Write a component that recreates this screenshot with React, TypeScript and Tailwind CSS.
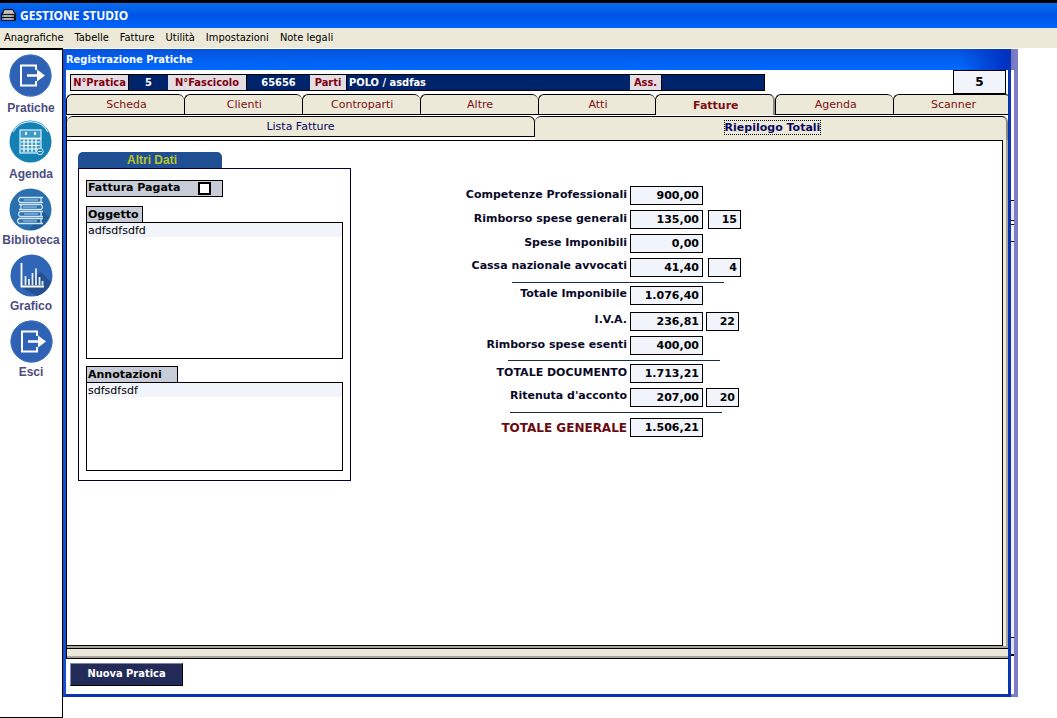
import React, { useState } from "react";
import clsx from "clsx";

const ExitIcon = () => (
  <svg viewBox="0 0 43 43" className="h-[43px] w-[43px]" aria-hidden="true">
    <circle cx="21.5" cy="21.5" r="21" fill="#2f62b4" />
    <circle cx="21.5" cy="21.5" r="20.5" fill="none" stroke="#3f78c4" />
    <path
      d="M27 16v-4.5H12v20h15V27"
      fill="none"
      stroke="#fff"
      strokeWidth="2"
    />
    <path d="M18 20.200h10v-4.700l8 6-8 6v-4.700H18z" fill="#fff" />
  </svg>
);

const AgendaIcon = () => (
  <svg viewBox="0 0 43 43" className="h-[43px] w-[43px]" aria-hidden="true">
    <circle cx="21.5" cy="21.5" r="21" fill="#1580b4" />
    <path
      d="M4 12a20 20 0 0 1 35 0"
      fill="none"
      stroke="#bfe4f2"
      strokeWidth="1.2"
    />
    <rect
      x="11"
      y="10"
      width="21"
      height="23"
      fill="#3b9cc8"
      stroke="#d8f0f8"
      strokeWidth="1.2"
    />
    <path d="M11 18.5h21" stroke="#fff" strokeWidth="1.6" />
    <path d="M17 12v3M26 12v3" stroke="#fff" strokeWidth="2" />
    <path
      d="M12 22h19M12 25.5h19M12 29h19M15 19v13M19 19v13M23 19v13M27 19v13"
      stroke="#fff"
      strokeWidth="1.2"
    />
    <circle cx="31" cy="31.5" r="3.2" fill="#1580b4" stroke="#d8f0f8" />
    <path d="M29.5 31.5h3" stroke="#fff" />
  </svg>
);

const BooksIcon = () => (
  <svg viewBox="0 0 43 43" className="h-[43px] w-[43px]" aria-hidden="true">
    <circle cx="21.5" cy="21.5" r="21" fill="#2a6fae" />
    <path d="M20 42h2a21 21 0 0 0 18-13l-5-5z" fill="#1f5d97" />
    <g fill="none" stroke="#cfe4f4" strokeWidth="1.3">
      <path d="M34 9.5H11q-3 2.500 0 5h23M32 10v4" />
      <path d="M10 16.5h22q3 2.500 0 5H10M12 17v4" />
      <path d="M34 23.5H11q-3 2.500 0 5h23M32 24v4" />
      <path d="M34 30.5H10q-3 2.500 0 5h24M32 31v4" />
    </g>
    <path
      d="M15 12h14M14 19h14M15 26h14M14 33h14"
      stroke="#7fb4dc"
      strokeWidth="1.5"
    />
  </svg>
);

const ChartIcon = () => (
  <svg viewBox="0 0 43 43" className="h-[43px] w-[43px]" aria-hidden="true">
    <circle cx="21.5" cy="21.5" r="21" fill="#2f66b8" />
    <path d="M31 18l10 10a21 21 0 0 1-14 14l-16-9z" fill="#24508f" />
    <path d="M11.5 9v23.5H34" fill="none" stroke="#fff" strokeWidth="1.8" />
    <path
      d="M15.5 31v-9M19 31v-6M22.5 31V19M26 31V14.5M29.5 31v-8M32.5 31v-4"
      stroke="#e4eefa"
      strokeWidth="1.8"
    />
  </svg>
);

const sidebar = [
  { name: "Pratiche", Icon: ExitIcon, space: "leading-[22px]" },
  { name: "Agenda", Icon: AgendaIcon, space: "leading-[22px]" },
  { name: "Biblioteca", Icon: BooksIcon, space: "pt-[2px] leading-[18px]" },
  { name: "Grafico", Icon: ChartIcon, space: "pt-[2px] leading-[18px]" },
  { name: "Esci", Icon: ExitIcon, space: "pt-[2px] leading-[18px]" },
];

const menu = [
  "Anagrafiche",
  "Tabelle",
  "Fatture",
  "Utilità",
  "Impostazioni",
  "Note legali",
];

const tabs = [
  "Scheda",
  "Clienti",
  "Controparti",
  "Altre",
  "Atti",
  "Fatture",
  "Agenda",
  "Scanner",
];

interface TotalRow {
  id: string;
  label: string;
  value: string;
  rate?: string;
  raised?: boolean;
  space: string;
  rateGap?: string;
  rule?: string;
  grand?: boolean;
}

const totals: TotalRow[] = [
  { id: "comp", label: "Competenze Professionali", value: "900,00", space: "" },
  {
    id: "gen",
    label: "Rimborso spese generali",
    value: "135,00",
    rate: "15",
    rateGap: "ml-[5px]",
    space: "mt-[5px]",
  },
  { id: "imp", label: "Spese Imponibili", value: "0,00", space: "mt-[5px]" },
  {
    id: "cassa",
    label: "Cassa nazionale avvocati",
    value: "41,40",
    rate: "4",
    rateGap: "ml-[5px]",
    raised: true,
    space: "mt-[5px]",
  },
  {
    id: "totimp",
    label: "Totale Imponibile",
    value: "1.076,40",
    raised: true,
    rule: "ml-[62px] mt-[5px]",
    space: "mt-[3px]",
  },
  {
    id: "iva",
    label: "I.V.A.",
    value: "236,81",
    rate: "22",
    rateGap: "ml-[3px]",
    raised: true,
    space: "mt-[7px]",
  },
  {
    id: "esenti",
    label: "Rimborso spese esenti",
    value: "400,00",
    space: "mt-[5px]",
  },
  {
    id: "doc",
    label: "TOTALE DOCUMENTO",
    value: "1.713,21",
    rule: "ml-[58px] mt-[5px]",
    space: "mt-[3px]",
  },
  {
    id: "rit",
    label: "Ritenuta d'acconto",
    value: "207,00",
    rate: "20",
    rateGap: "ml-[3px]",
    raised: true,
    space: "mt-[5px]",
  },
  {
    id: "grand",
    label: "TOTALE GENERALE",
    value: "1.506,21",
    rule: "ml-[60px] mt-[5px]",
    space: "mt-[5px]",
    grand: true,
  },
];

const condensed =
  "font-['DejaVu_Sans_Condensed','DejaVu_Sans',Tahoma,sans-serif]";

const Field = ({
  id,
  label,
  value,
  labelClass,
  inputClass,
}: {
  id: string;
  label: string;
  value: string;
  labelClass: string;
  inputClass: string;
}) => (
  <>
    <label
      htmlFor={id}
      className={clsx(
        "shrink-0 border-r border-black bg-[#e4dde2] text-center text-[#800010]",
        labelClass
      )}
    >
      {label}
    </label>
    <input
      id={id}
      defaultValue={value}
      className={clsx(
        "min-w-0 bg-[#00246b] text-white outline-none",
        inputClass
      )}
    />
  </>
);

const Totals = () => (
  <div className="pt-[45px]">
    {totals.map((row) => (
      <React.Fragment key={row.id}>
        {row.rule && (
          <hr className={clsx("w-[212px] border-[#123048]", row.rule)} />
        )}
        <div className={clsx("flex h-[19px] items-center", row.space)}>
          <label
            htmlFor={row.id}
            className={clsx(
              "w-[177px] text-right whitespace-nowrap",
              row.raised && "pb-[3px]",
              row.grand ? "text-[12px] text-[#6b0a10]" : "text-[11px]"
            )}
          >
            {row.label}
          </label>
          <input
            id={row.id}
            defaultValue={row.value}
            className="ml-[3px] h-[19px] w-[73px] border border-black bg-[#f1f4fa] px-[3px] text-right text-[11px] text-black outline-none"
          />
          {row.rate && (
            <input
              aria-label={`${row.label} %`}
              defaultValue={row.rate}
              className={clsx(
                "h-[19px] w-[33px] border border-black bg-[#f1f4fa] px-[3px] text-right text-[11px] text-black outline-none",
                row.rateGap
              )}
            />
          )}
        </div>
      </React.Fragment>
    ))}
  </div>
);

const NoteBox = ({
  id,
  label,
  value,
  labelClass,
  boxClass,
}: {
  id: string;
  label: string;
  value: string;
  labelClass: string;
  boxClass: string;
}) => (
  <div>
    <label
      htmlFor={id}
      className={clsx(
        "block h-4 border border-b-0 border-black bg-[#c8ccd6] pl-px text-[11px] leading-[15px] font-bold",
        labelClass
      )}
    >
      {label}
    </label>
    <textarea
      id={id}
      defaultValue={value}
      className={clsx(
        "block w-[257px] resize-none border border-black bg-linear-to-b from-[#f1f4fa] from-[14px] to-white to-[14px] px-px pt-px text-[11px] leading-[14px] outline-none",
        boxClass
      )}
    />
  </div>
);

const AltriDati = () => (
  <section className="w-[273px]">
    <h2 className="h-4 w-[144px] rounded-t-[5px] bg-[#1f4f92] pl-1 text-center font-['Liberation_Sans',Arial,sans-serif] text-[12px] leading-[17px] font-bold text-[#b8c428]">
      Altri Dati
    </h2>
    <div className="border border-[#00003c] px-[7px] pt-[11px] pb-[9px]">
      <label className="flex h-[17px] w-[137px] items-center justify-between border border-black bg-[#c8ccd6] pr-[11px] pl-px text-[11px] font-bold">
        Fattura Pagata
        <input
          type="checkbox"
          className="h-[13px] w-[13px] appearance-none border-2 border-black bg-white checked:bg-black"
        />
      </label>
      <div className="flex flex-col gap-[7px] pt-[9px]">
        <NoteBox
          id="oggetto"
          label="Oggetto"
          value="adfsdfsdfd"
          labelClass="w-[57px]"
          boxClass="h-[137px]"
        />
        <NoteBox
          id="annotazioni"
          label="Annotazioni"
          value="sdfsdfsdf"
          labelClass="w-[92px]"
          boxClass="h-[89px]"
        />
      </div>
    </div>
  </section>
);

const App = () => {
  const [tab, setTab] = useState("Fatture");
  const [subTab, setSubTab] = useState("Riepilogo Totali");

  return (
    <div className="flex min-h-screen flex-col bg-white font-['DejaVu_Sans',Verdana,sans-serif] text-black">
      <header className={condensed}>
        <div className="flex h-7 items-center gap-1 border-t-[3px] border-black bg-linear-to-b from-[#0a6cf0] via-[#0054e3] to-[#0066ff] pl-px">
          <svg viewBox="0 0 15 13" className="h-[13px] w-[15px]" aria-hidden="true">
            <path d="M3 0h9l3 5v7H0V5z" fill="#15151c" />
            <path d="M3.5 1h8l2 4H2z" fill="#b4aeb0" />
            <path d="M1 6h12v2H1zM1 9h12v2H1z" fill="#8c8890" />
            <path d="M3 3h9M3 7h8M3 10h8" stroke="#e4dede" strokeWidth="0.8" />
          </svg>
          <h1 className="font-['Noto_Sans','Trebuchet_MS',sans-serif] text-[12px] font-bold text-white">
            GESTIONE STUDIO
          </h1>
        </div>
        <nav className="flex h-5 items-center gap-[11px] bg-[#ece9d8] pl-1 text-[11px]">
          {menu.map((item) => (
            <button key={item} type="button">
              {item}
            </button>
          ))}
        </nav>
      </header>

      <div className="flex flex-1">
        <aside className="flex w-[63px] shrink-0 flex-col items-center gap-px border-t-2 border-r border-b border-black pt-1">
          {sidebar.map(({ name, Icon, space }) => (
            <button
              key={name}
              type="button"
              className={clsx(
                "flex h-[65px] flex-col items-center font-['Liberation_Sans',Arial,sans-serif] text-[12px] font-bold text-[#4c4c80]",
                space
              )}
            >
              <Icon />
              {name}
            </button>
          ))}
        </aside>

        <div className="mt-px mr-[39px] mb-[21px] flex min-w-0 flex-1">
          <main className="flex min-w-0 flex-1 flex-col border-x-3 border-b-3 border-[#0a34b4] border-l-[#1450d4]">
            <div className="h-[21px] bg-linear-to-b from-[#0a50d8] via-[#0060f0] to-[#0068ff]">
              <h2
                className={clsx(
                  "bg-linear-to-r from-transparent from-95% to-[#0030c0] text-[11px] leading-[21px] font-bold text-white",
                  condensed
                )}
              >
                Registrazione Pratiche
              </h2>
            </div>

            <div className="flex h-6 items-start justify-between pr-[2px] pl-1">
              <div
                className={clsx(
                  "mt-1 flex h-[17px] min-w-0 max-w-[695px] flex-1 border border-black text-[11px] leading-[15px] font-bold",
                  condensed
                )}
              >
                <Field
                  id="pratica"
                  label="N°Pratica"
                  value="5"
                  labelClass="w-[58px]"
                  inputClass="w-[39px] text-center"
                />
                <Field
                  id="fascicolo"
                  label="N°Fascicolo"
                  value="65656"
                  labelClass="w-[79px]"
                  inputClass="w-[63px] text-center"
                />
                <Field
                  id="parti"
                  label="Parti"
                  value="POLO / asdfas"
                  labelClass="w-[37px]"
                  inputClass="flex-1 pl-[2px]"
                />
                <Field
                  id="ass"
                  label="Ass."
                  value=""
                  labelClass="w-[32px]"
                  inputClass="w-[102px]"
                />
              </div>
              <input
                aria-label="Numero pratica"
                defaultValue="5"
                className="h-6 w-[53px] border border-black bg-[#f1f4fa] text-center text-[12px] font-bold outline-none"
              />
            </div>

            <div className="overflow-hidden">
              <div role="tablist" className="-mr-[3px] flex h-[21px]">
                {tabs.map((name) => (
                  <button
                    key={name}
                    type="button"
                    role="tab"
                    aria-selected={tab === name}
                    onClick={() => setTab(name)}
                    className={clsx(
                      "flex-1 rounded-t-[6px] border-t border-l border-black bg-[#ece9d8] pl-[2px] text-[11px] text-[#7c1014]",
                      tab === name
                        ? "border-r-2 border-r-[#8c8a80] pt-[3px] font-bold"
                        : "border-b pt-[2px]"
                    )}
                  >
                    {name}
                  </button>
                ))}
              </div>
            </div>

            <div className="mt-px flex flex-1 flex-col">
              <div role="tablist" className="flex h-6 border-l border-black">
                {["Lista Fatture", "Riepilogo Totali"].map((name) => (
                  <button
                    key={name}
                    type="button"
                    role="tab"
                    aria-selected={subTab === name}
                    onClick={() => setSubTab(name)}
                    className={clsx(
                      "flex-1 rounded-t-[6px] border-t border-r border-black bg-[#ece9d8] text-[11px] text-[#0a0a60]",
                      subTab === name
                        ? "border-r-2 border-r-[#8c8a80] pl-1 font-bold"
                        : "mb-[3px] border-b pt-[2px]"
                    )}
                  >
                    <span
                      className={clsx(
                        subTab === name &&
                          "inline-block border border-dotted border-black leading-[13px]"
                      )}
                    >
                      {name}
                    </span>
                  </button>
                ))}
              </div>
              <div className="flex flex-1 border-r-2 border-[#a8a69c] bg-[#ece9d8] pr-[3px]">
                <div className="flex flex-1 items-start gap-[99px] border border-black bg-white pt-[11px] pl-[11px]">
                  <AltriDati />
                  <div className="-mt-[11px] font-bold text-[#0a0a28]">
                    <Totals />
                  </div>
                </div>
              </div>
              <div className="border-b border-l border-black bg-[#ece9d8]">
                <div className="h-[2px] bg-[#a8a69c]" />
                <div className="h-2 border-t border-black" />
                <div className="h-[2px] bg-[#a8a69c]" />
              </div>
            </div>

            <div className="h-[35px] pt-px pl-1">
              <button
                type="button"
                className={clsx(
                  "h-[23px] w-[113px] border border-t-[#8088a8] border-r-black border-b-black border-l-[#8088a8] bg-[#232c58] text-[11px] font-bold text-white",
                  condensed
                )}
              >
                Nuova Pratica
              </button>
            </div>
          </main>

          {/* Edge of the window that sits behind the active one */}
          <div className="flex w-[7px] flex-col border-r-4 border-b-3 border-[#7c7cc8]">
            <div className="h-[21px] bg-[#7478c8]" />
            <div className="h-[130px]" />
            <div className="h-[21px] border-y border-black bg-[#ece9e4]" />
            <div className="h-[3px]" />
            <div className="h-[18px] border-y border-black bg-[#f4f2ee]" />
            <div className="flex-1 border-b border-black bg-[#f0eff0]" />
            <div className="h-[18px] border-b-2 border-black bg-[#e6e4de]" />
            <div className="h-[38px]" />
          </div>
        </div>
      </div>
    </div>
  );
};

export default App;
